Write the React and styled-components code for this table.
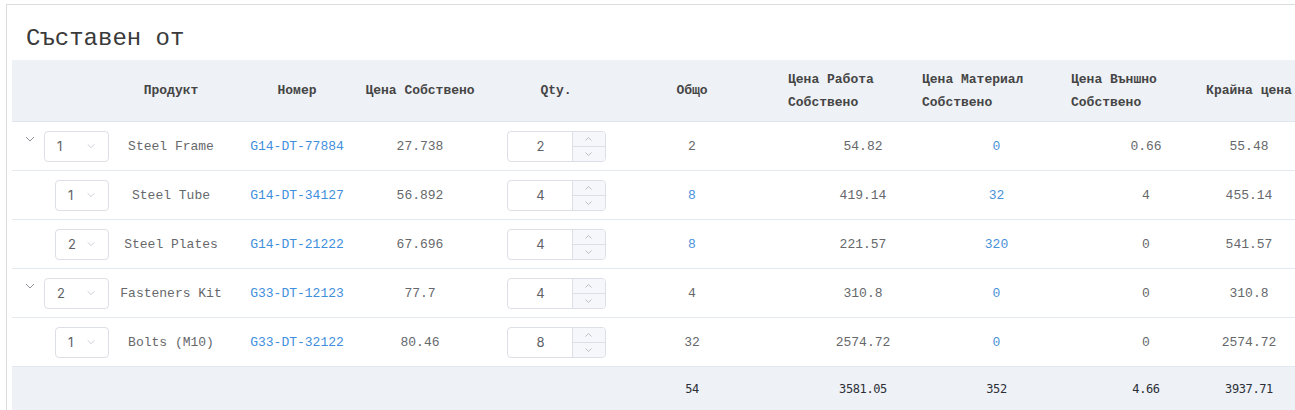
import React from 'react'
import styled, { createGlobalStyle } from 'styled-components'

const GlobalStyle = createGlobalStyle`
  html, body {
    margin: 0;
    padding: 0;
    background: #fff;
    overflow: hidden;
  }
`

const COLS = '106px 106px 146px 100px 172px 100px 180px 149px 150px 56px 60px'

const rows = [
  { level: 0, pos: 1, name: 'Steel Frame', code: 'G14-DT-77884', own: '27.738', qty: 2, total: '2', work: '54.82', mat: '0', ext: '0.66', final: '55.48' },
  { level: 1, pos: 1, name: 'Steel Tube', code: 'G14-DT-34127', own: '56.892', qty: 4, total: '8', totalBlue: true, work: '419.14', mat: '32', ext: '4', final: '455.14' },
  { level: 1, pos: 2, name: 'Steel Plates', code: 'G14-DT-21222', own: '67.696', qty: 4, total: '8', totalBlue: true, work: '221.57', mat: '320', ext: '0', final: '541.57' },
  { level: 0, pos: 2, name: 'Fasteners Kit', code: 'G33-DT-12123', own: '77.7', qty: 4, total: '4', work: '310.8', mat: '0', ext: '0', final: '310.8' },
  { level: 1, pos: 1, name: 'Bolts (M10)', code: 'G33-DT-32122', own: '80.46', qty: 8, total: '32', work: '2574.72', mat: '0', ext: '0', final: '2574.72' },
]

const Panel = styled.div`
  margin: 4px 0 0 6px;
  border: 1px solid #dcdcdc;
  border-right: none;
  padding: 0 0 0 5px;
  width: 1400px;
`

const Title = styled.h2`
  margin: 0;
  padding: 19px 0 6px 14px;
  font-family: "Liberation Mono", "Courier New", monospace;
  font-weight: normal;
  font-size: 24px;
  line-height: 30px;
  color: #3a3a3a;
`

const Grid = styled.div`
  display: grid;
  grid-template-columns: ${COLS};
  align-items: center;
`

const HeadRow = styled(Grid)`
  height: 62px;
  background: #eef1f6;
  border-bottom: 1px solid #e1e6ee;
  box-sizing: border-box;
`

const BodyRow = styled(Grid)`
  height: 49px;
  border-bottom: 1px solid #e4e9f0;
  box-sizing: border-box;
`

const SumRow = styled(Grid)`
  height: 43px;
  background: #eef1f6;
`

const HeadCell = styled.div`
  display: flex;
  justify-content: ${p => (p.$left ? 'flex-start' : 'center')};
  padding-left: ${p => p.$pad || 0}px;
  font-family: "Liberation Mono", "Courier New", monospace;
  font-size: 13px;
  font-weight: bold;
  line-height: 23px;
  color: #454545;
  white-space: nowrap;
`

const Cell = styled.div`
  display: flex;
  justify-content: center;
  padding-left: ${p => p.$pad || 0}px;
  font-family: "Liberation Mono", "Courier New", monospace;
  font-size: 13px;
  color: ${p => (p.$blue ? '#4a92d8' : '#66686c')};
  white-space: nowrap;
`

const SumCell = styled(Cell)`
  font-family: "DejaVu Sans Mono", monospace;
  font-size: 12px;
  letter-spacing: -0.4px;
  color: #2b2f36;
`

const Link = styled.a`
  color: #3f8fdc;
  text-decoration: none;
`

const TreeCell = styled.div`
  display: flex;
  align-items: center;
  padding: 0 9px 0 12px;
`

const Expand = styled.svg`
  width: 12px;
  height: 12px;
  margin-top: -14px;
  flex-shrink: 0;
`

const Select = styled.div`
  margin-left: auto;
  width: ${p => p.$w}px;
  height: 31px;
  box-sizing: border-box;
  border: 1px solid #dcdfe6;
  border-radius: 4px;
  display: flex;
  align-items: center;
  justify-content: space-between;
  padding: 0 12px;
  font-family: Inter, "Liberation Sans", sans-serif;
  font-size: 13px;
  color: #606266;
`

const Arrow = styled.svg`
  width: 12px;
  height: 8px;
`

const NumberBox = styled.div`
  width: 99px;
  height: 31px;
  box-sizing: border-box;
  border: 1px solid #dcdfe6;
  border-radius: 4px;
  display: flex;
  overflow: hidden;
  font-family: Inter, "Liberation Sans", sans-serif;
  font-size: 13px;
  color: #606266;
`

const NumberValue = styled.div`
  flex: 1;
  display: flex;
  align-items: center;
  justify-content: center;
  padding-left: 2px;
`

const Steps = styled.div`
  width: 32px;
  display: flex;
  flex-direction: column;
  border-left: 1px solid #dcdfe6;
  background: #f5f7fa;
`

const Step = styled.div`
  flex: 1;
  display: flex;
  align-items: center;
  justify-content: center;
  & + & {
    border-top: 1px solid #dcdfe6;
  }
`

const Chevron = ({ up, color = '#a8abb2', w = 10 }) => (
  <Arrow viewBox="0 0 12 8" style={{ width: w }}>
    <path d={up ? 'M2 6 L6 2 L10 6' : 'M2 2 L6 6 L10 2'} fill="none" stroke={color} strokeWidth="1" />
  </Arrow>
)

const QtyInput = ({ value }) => (
  <NumberBox>
    <NumberValue>{value}</NumberValue>
    <Steps>
      <Step><Chevron up w={9} /></Step>
      <Step><Chevron w={9} /></Step>
    </Steps>
  </NumberBox>
)

const App = () => (
  <>
    <GlobalStyle />
    <Panel>
      <Title>Съставен от</Title>
      <HeadRow>
        <HeadCell />
        <HeadCell>Продукт</HeadCell>
        <HeadCell>Номер</HeadCell>
        <HeadCell>Цена Собствено</HeadCell>
        <HeadCell>Qty.</HeadCell>
        <HeadCell>Общо</HeadCell>
        <HeadCell $left $pad={46}>Цена Работа<br />Собствено</HeadCell>
        <HeadCell $left>Цена Материал<br />Собствено</HeadCell>
        <HeadCell $left>Цена Външно<br />Собствено</HeadCell>
        <HeadCell>Крайна цена</HeadCell>
        <HeadCell />
      </HeadRow>
      {rows.map((r, i) => (
        <BodyRow key={i}>
          <TreeCell>
            {r.level === 0 && (
              <Expand viewBox="0 0 12 12">
                <path d="M2 4 L6 8 L10 4" fill="none" stroke="#909399" strokeWidth="1" />
              </Expand>
            )}
            <Select $w={r.level === 0 ? 65 : 54}>
              <span>{r.pos}</span>
              <Chevron color="#c0c4cc" />
            </Select>
          </TreeCell>
          <Cell>{r.name}</Cell>
          <Cell><Link href="#">{r.code}</Link></Cell>
          <Cell>{r.own}</Cell>
          <Cell><QtyInput value={r.qty} /></Cell>
          <Cell $blue={r.totalBlue}>{r.total}</Cell>
          <Cell $pad={62}>{r.work}</Cell>
          <Cell $blue>{r.mat}</Cell>
          <Cell>{r.ext}</Cell>
          <Cell>{r.final}</Cell>
          <Cell />
        </BodyRow>
      ))}
      <SumRow>
        <SumCell />
        <SumCell />
        <SumCell />
        <SumCell />
        <SumCell />
        <SumCell>54</SumCell>
        <SumCell $pad={62}>3581.05</SumCell>
        <SumCell>352</SumCell>
        <SumCell>4.66</SumCell>
        <SumCell>3937.71</SumCell>
        <SumCell />
      </SumRow>
    </Panel>
  </>
)

export default App
